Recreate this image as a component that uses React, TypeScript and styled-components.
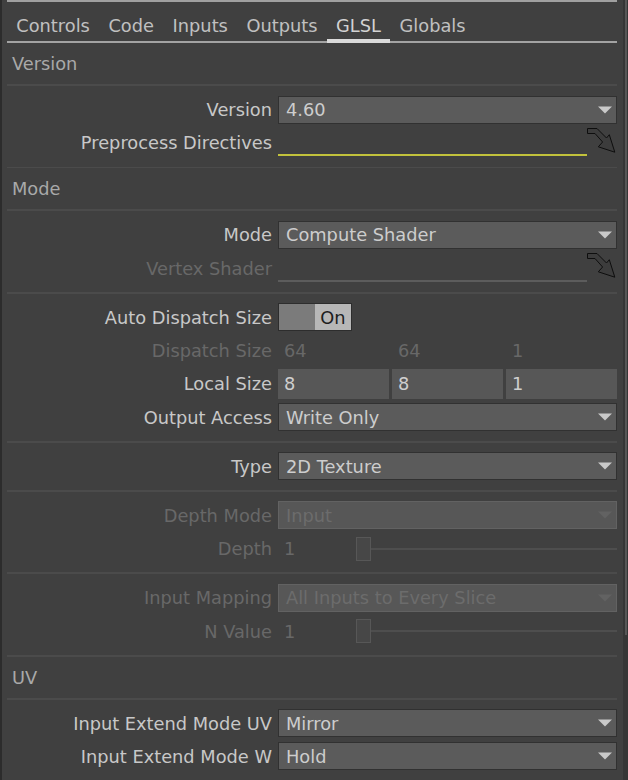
import React from "react";
import styled, { createGlobalStyle } from "styled-components";

const GlobalStyle = createGlobalStyle`
  html, body {
    margin: 0;
    background: #404040;
  }
  body {
    font-family: "DejaVu Sans", Verdana, sans-serif;
    font-size: 17.8px;
  }
`;

const Panel = styled.div`
  display: flex;
  width: 628px;
  height: 780px;
  overflow: hidden;
  box-sizing: border-box;
  background: #404040;
  border-left: 2px solid #2c2c2c;
`;

const Content = styled.div`
  flex: 1;
  min-width: 0;
  display: flex;
  flex-direction: column;
  padding: 0 6px 0 5px;
`;

const ScrollTrack = styled.div`
  width: 5px;
  flex-shrink: 0;
  display: flex;
  justify-content: center;
  background: #363636;
`;

const ScrollThumb = styled.div`
  width: 2px;
  height: 635px;
  background: #575757;
`;

const TopRule = styled.div`
  height: 2px;
  background: #a0a0a0;
`;

const TabBar = styled.div`
  display: flex;
  height: 42px;
  box-sizing: border-box;
  border-bottom: 2px solid #a3a3a3;
`;

const Tab = styled.div<{ $active?: boolean }>`
  display: flex;
  align-items: center;
  padding: 10px 9.3px 0;
  margin-bottom: -2px;
  border-bottom: 4px solid ${({ $active }) => ($active ? "#dadada" : "transparent")};
  color: ${({ $active }) => ($active ? "#d2d2d2" : "#c0c0c0")};
  white-space: nowrap;
`;

const SectionHeader = styled.div`
  height: 41.5px;
  display: flex;
  align-items: center;
  padding-left: 5px;
  color: #a9a9a9;
`;

const Separator = styled.div`
  height: 2px;
  background: #4b4b4b;
`;

const Group = styled.div`
  padding: 7px 0;
`;

const Row = styled.div`
  display: grid;
  grid-template-columns: 265px 1fr;
  column-gap: 6px;
  height: 33.25px;
  align-items: center;
`;

const Label = styled.div<{ $disabled?: boolean }>`
  text-align: right;
  white-space: nowrap;
  color: ${({ $disabled }) => ($disabled ? "#686868" : "#c8c8c8")};
`;

const MenuBox = styled.div<{ $disabled?: boolean }>`
  height: 28px;
  box-sizing: border-box;
  display: flex;
  align-items: center;
  justify-content: space-between;
  padding: 0 4px 0 7px;
  background: ${({ $disabled }) => ($disabled ? "#575757" : "#5b5b5b")};
  border: 1px solid ${({ $disabled }) => ($disabled ? "#626262" : "#313131")};
  color: ${({ $disabled }) => ($disabled ? "#6c6c6c" : "#cdcdcd")};
  white-space: nowrap;
`;

const LineCell = styled.div`
  align-self: stretch;
  display: flex;
  align-items: center;
`;

const LineField = styled.div<{ $accent?: boolean }>`
  flex: 1;
  height: 27px;
  box-sizing: border-box;
  border-bottom: 2px solid ${({ $accent }) => ($accent ? "#c2c23c" : "#5c5c5c")};
`;

const ArrowIcon = styled.svg`
  flex-shrink: 0;
  align-self: flex-start;
`;

const Toggle = styled.div`
  width: 74px;
  height: 28px;
  box-sizing: border-box;
  display: flex;
  border: 1px solid #2d2d2d;
`;

const ToggleOff = styled.div`
  width: 36px;
  background: #7b7b7b;
`;

const ToggleOn = styled.div`
  flex: 1;
  display: flex;
  align-items: center;
  justify-content: center;
  background: #b7b7b7;
  color: #1e1e1e;
`;

const Triple = styled.div`
  display: grid;
  grid-template-columns: repeat(3, 1fr);
  column-gap: 3px;
`;

const NumberField = styled.div`
  height: 30px;
  display: flex;
  align-items: center;
  padding-left: 6px;
  background: #575757;
  color: #cfcfcf;
`;

const PlainValue = styled.div`
  padding-left: 6px;
  color: #686868;
`;

const SliderCell = styled.div`
  display: grid;
  grid-template-columns: 78px 1fr;
  align-items: center;
`;

const SliderTrack = styled.div`
  height: 25px;
  display: flex;
  align-items: center;
  background: linear-gradient(#4e4e4e, #4e4e4e) center / 100% 2px no-repeat;
`;

const SliderHandle = styled.div`
  width: 15px;
  height: 24px;
  box-sizing: border-box;
  background: #474747;
  border: 1px solid #575757;
`;

const Caret = ({ color }: { color: string }) => (
  <svg width="14" height="8" viewBox="0 0 14 8">
    <polygon points="0,0.5 14,0.5 7,7.5" fill={color} />
  </svg>
);

const PullArrow = () => (
  <ArrowIcon width="30" height="27" viewBox="0 0 30 27">
    <polygon
      points="0.5,2.5 10,2.5 19.5,12 22.3,8.7 27.8,26.2 11.3,20.8 15.6,16 8,7.5 0.5,7.5"
      fill="#3c3c3c"
      stroke="#0e0e0e"
      strokeWidth="1"
    />
  </ArrowIcon>
);

const Menu = ({ value, disabled }: { value: string; disabled?: boolean }) => (
  <MenuBox $disabled={disabled}>
    <span>{value}</span>
    <Caret color={disabled ? "#626262" : "#c9c9c9"} />
  </MenuBox>
);

const MenuRow = ({ label, value, disabled }: { label: string; value: string; disabled?: boolean }) => (
  <Row>
    <Label $disabled={disabled}>{label}</Label>
    <Menu value={value} disabled={disabled} />
  </Row>
);

const SliderRow = ({ label, value }: { label: string; value: string }) => (
  <Row>
    <Label $disabled>{label}</Label>
    <SliderCell>
      <PlainValue>{value}</PlainValue>
      <SliderTrack>
        <SliderHandle />
      </SliderTrack>
    </SliderCell>
  </Row>
);

const tabs = ["Controls", "Code", "Inputs", "Outputs", "GLSL", "Globals"];

export default function App() {
  return (
    <>
      <GlobalStyle />
      <Panel>
        <Content>
          <TopRule />
          <TabBar>
            {tabs.map((t) => (
              <Tab key={t} $active={t === "GLSL"}>
                {t}
              </Tab>
            ))}
          </TabBar>

          <SectionHeader>Version</SectionHeader>
          <Separator />
          <Group>
            <MenuRow label="Version" value="4.60" />
            <Row>
              <Label>Preprocess Directives</Label>
              <LineCell>
                <LineField $accent />
                <PullArrow />
              </LineCell>
            </Row>
          </Group>
          <Separator />

          <SectionHeader>Mode</SectionHeader>
          <Separator />
          <Group>
            <MenuRow label="Mode" value="Compute Shader" />
            <Row>
              <Label $disabled>Vertex Shader</Label>
              <LineCell>
                <LineField />
                <PullArrow />
              </LineCell>
            </Row>
          </Group>
          <Separator />

          <Group>
            <Row>
              <Label>Auto Dispatch Size</Label>
              <div>
                <Toggle>
                  <ToggleOff />
                  <ToggleOn>On</ToggleOn>
                </Toggle>
              </div>
            </Row>
            <Row>
              <Label $disabled>Dispatch Size</Label>
              <Triple>
                <PlainValue>64</PlainValue>
                <PlainValue>64</PlainValue>
                <PlainValue>1</PlainValue>
              </Triple>
            </Row>
            <Row>
              <Label>Local Size</Label>
              <Triple>
                <NumberField>8</NumberField>
                <NumberField>8</NumberField>
                <NumberField>1</NumberField>
              </Triple>
            </Row>
            <MenuRow label="Output Access" value="Write Only" />
          </Group>
          <Separator />

          <Group>
            <MenuRow label="Type" value="2D Texture" />
          </Group>
          <Separator />

          <Group>
            <MenuRow label="Depth Mode" value="Input" disabled />
            <SliderRow label="Depth" value="1" />
          </Group>
          <Separator />

          <Group>
            <MenuRow label="Input Mapping" value="All Inputs to Every Slice" disabled />
            <SliderRow label="N Value" value="1" />
          </Group>
          <Separator />

          <SectionHeader>UV</SectionHeader>
          <Separator />
          <Group>
            <MenuRow label="Input Extend Mode UV" value="Mirror" />
            <MenuRow label="Input Extend Mode W" value="Hold" />
          </Group>
        </Content>
        <ScrollTrack>
          <ScrollThumb />
        </ScrollTrack>
      </Panel>
    </>
  );
}
